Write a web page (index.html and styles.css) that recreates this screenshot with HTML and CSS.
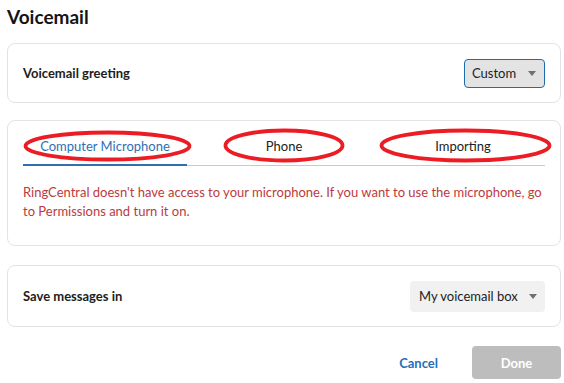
FILE: index.html
```html
<!DOCTYPE html>
<html>
<head>
<meta charset="utf-8">
<link rel="stylesheet" href="styles.css">
</head>
<body>
<div class="page">
  <h1 class="title">Voicemail</h1>

  <div class="card row-card first">
    <div class="label">Voicemail greeting</div>
    <div class="select select-focus"><span>Custom</span><span class="caret"></span></div>
  </div>

  <div class="card tab-card">
    <div class="tabs">
      <div class="tab active">Computer Microphone</div>
      <div class="tab">Phone</div>
      <div class="tab">Importing</div>
    </div>
    <p class="error">RingCentral doesn't have access to your microphone. If you want to use the microphone, go to Permissions and turn it on.</p>
    <svg class="marks" width="554" height="50" viewBox="0 0 554 50">
      <ellipse cx="100.5" cy="25" rx="82" ry="13.5"/>
      <ellipse cx="277" cy="24.5" rx="58.5" ry="15"/>
      <ellipse cx="458.5" cy="24.5" rx="84" ry="15"/>
    </svg>
  </div>

  <div class="card row-card save">
    <div class="label">Save messages in</div>
    <div class="select select-plain"><span>My voicemail box</span><span class="caret"></span></div>
  </div>

  <div class="actions">
    <button class="btn-cancel">Cancel</button>
    <button class="btn-done">Done</button>
  </div>
</div>
</body>
</html>
```
FILE: styles.css
```css
* { box-sizing: border-box; }
html, body { margin: 0; padding: 0; background: #fff; }
body { font-family: Lato, "Open Sans", sans-serif; color: #1d1d1d; }
.page { padding: 4px 3px 0 7px; width: 564px; }
.title { margin: 0; font-size: 19px; font-weight: 700; line-height: 26px; height: 26px; color: #141414; }
.card { border: 1px solid #e3e3e3; border-radius: 8px; background: #fff; }
.row-card { display: flex; align-items: center; justify-content: space-between; padding: 0 15px; }
.first { margin-top: 13px; height: 60px; }
.label { font-size: 13px; font-weight: 700; color: #1d1d1d; }
.select { display: flex; align-items: center; justify-content: space-between; font-size: 13px; color: #222; border-radius: 4px; }
.select-focus { width: 81px; height: 29px; background: #e3e3e3; border: 1px solid #1e6cb0; padding: 0 8px 0 7px; }
.select-plain { width: 135px; height: 31px; background: #f1f1f1; padding: 0 8px 0 9px; }
.caret { width: 0; height: 0; border-left: 4.5px solid transparent; border-right: 4.5px solid transparent; border-top: 5px solid #707070; }
.tab-card { position: relative; margin-top: 17px; height: 126px; padding: 16px 15px 0; }
.tabs { display: flex; gap: 15px; border-bottom: 1px solid #c9c9c9; }
.tab { flex: 1; text-align: center; font-size: 13px; line-height: 18px; padding-bottom: 9px; color: #222; margin-bottom: -1px; border-bottom: 2px solid transparent; }
.tab.active { color: #2f6fb2; border-bottom-color: #2f6fb2; }
.error { margin: 17px 0 0; font-size: 13px; line-height: 19px; color: #bc3a3e; }
.marks { position: absolute; left: -1px; top: 0; fill: none; stroke: #ec1c24; stroke-width: 3.8; }
.save { margin-top: 19px; height: 62px; }
.actions { display: flex; justify-content: flex-end; align-items: center; margin-top: 19px; gap: 34px; }
.btn-cancel { background: none; border: 0; padding: 0; font-family: inherit; font-size: 13px; font-weight: 700; color: #1f6fba; }
.btn-done { width: 89px; height: 33px; background: #bdbdbd; border: 0; border-radius: 4px; font-family: inherit; font-size: 13px; font-weight: 700; color: #fff; }
```
